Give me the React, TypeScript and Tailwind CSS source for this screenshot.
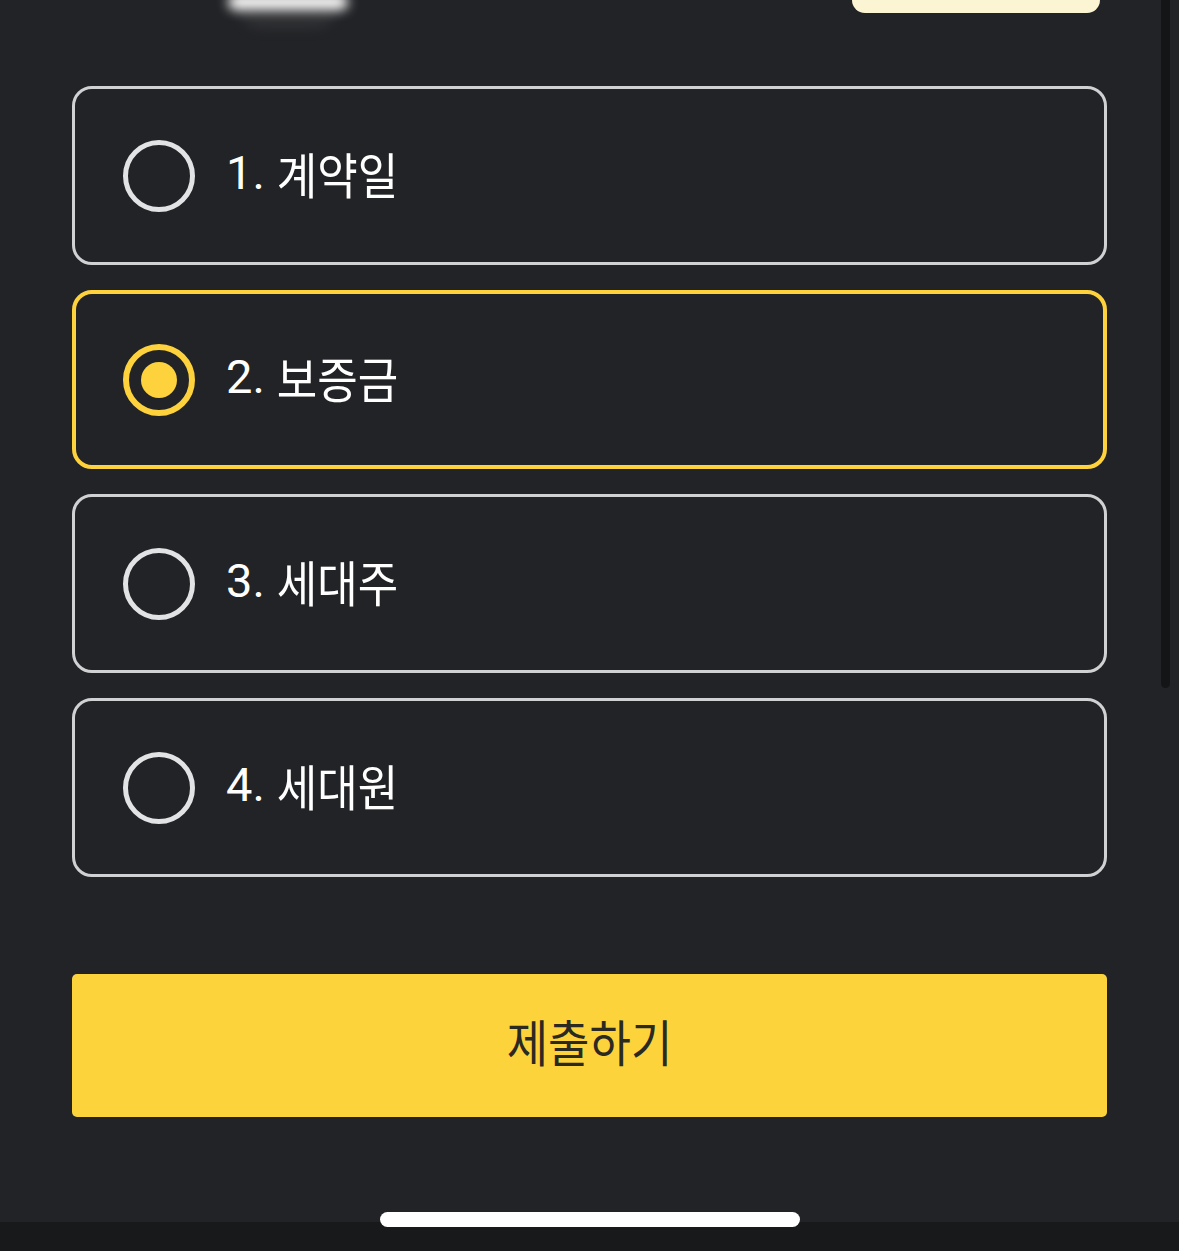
import React from "react";

const options = [
  { num: "1.", label: "계약일" },
  { num: "2.", label: "보증금" },
  { num: "3.", label: "세대주" },
  { num: "4.", label: "세대원" },
];

const FONT = { fontFamily: 'Roboto, "Noto Sans CJK KR", sans-serif' } as React.CSSProperties;
const KFONT = { fontFamily: '"Noto Sans CJK KR", sans-serif' } as React.CSSProperties;

function Radio({ selected }: { selected: boolean }) {
  if (selected) {
    return (
      <div className="w-[72px] h-[72px] shrink-0 rounded-full border-[6px] border-[#fdd23c] flex items-center justify-center">
        <div className="w-[36px] h-[36px] rounded-full bg-[#fdd23c]" />
      </div>
    );
  }
  return <div className="w-[72px] h-[72px] shrink-0 rounded-full border-[5px] border-[#e1e3e5]" />;
}

export default function App() {
  const selected = 1;
  return (
    <div
      className="relative w-[1179px] h-[1251px] bg-[#222326] overflow-hidden flex flex-col"
      style={FONT}
    >
      {/* top cut-off content */}
      <div className="h-[86px] shrink-0 flex items-start pl-[228px] pr-[79px]">
        <div className="relative w-[120px] h-[16px] -mt-[6px]">
          <div className="absolute left-[8px] right-[8px] top-[8px] h-[26px] rounded-b-full bg-[#3a3b3e] blur-[6px] opacity-60" />
          <div className="absolute inset-0 rounded-full bg-white blur-[6px]" />
        </div>
        <div className="ml-auto w-[248px] h-[13px] rounded-b-[28px] bg-[#fbf5d3]" />
      </div>

      {/* options */}
      <div className="flex flex-col gap-[25px] px-[72px]">
        {options.map((o, i) => {
          const isSel = i === selected;
          return (
            <div
              key={o.num}
              className={
                isSel
                  ? "h-[179px] rounded-[20px] border-[4px] border-[#fdd23c] flex items-center pl-[47px]"
                  : "h-[179px] rounded-[20px] border-[3px] border-[#d0d1d2] flex items-center pl-[48px]"
              }
            >
              <Radio selected={isSel} />
              <div className="ml-[31px] text-white leading-none flex items-center -translate-y-[3px]">
                <span className="text-[47px]" style={FONT}>{o.num}</span>
                <span
                  className="ml-[12px] text-[44px] tracking-[0px] scale-y-[1.11] inline-block"
                  style={KFONT}
                >
                  {o.label}
                </span>
              </div>
            </div>
          );
        })}
      </div>

      {/* submit button */}
      <div className="px-[72px] mt-[97px]">
        <button className="w-full h-[143px] rounded-[5px] bg-[#fdd33b] flex items-center justify-center">
          <span
            className="text-[45px] leading-none text-[#2a2922] tracking-[0px] scale-y-[1.1] inline-block -translate-y-[5px]"
            style={KFONT}
          >
            제출하기
          </span>
        </button>
      </div>

      <div className="flex-1" />
      {/* bottom system bar */}
      <div className="h-[29px] shrink-0 bg-[#18191b]" />

      {/* scrollbar */}
      <div className="absolute right-[9px] top-0 w-[9px] h-[688px] rounded-b-full bg-[#141517]" />
      {/* home indicator */}
      <div className="absolute left-[380px] top-[1212px] w-[420px] h-[15px] rounded-full bg-white" />
    </div>
  );
}
